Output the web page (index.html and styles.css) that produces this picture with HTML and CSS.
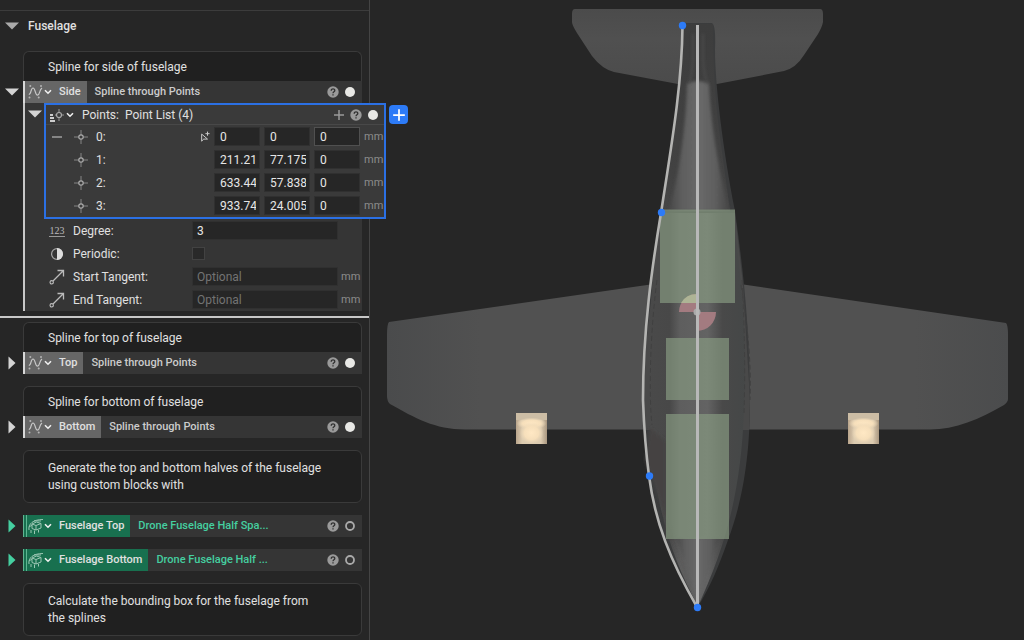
FILE: index.html
```html
<!DOCTYPE html>
<html lang="en">
<head>
<meta charset="utf-8">
<title>Fuselage</title>
<link rel="stylesheet" href="styles.css">
</head>
<body>
<svg class="defs" aria-hidden="true">
  <symbol id="down" viewBox="0 0 14 8"><path d="M0 0.500H14L7 7.500Z" fill="currentColor"/></symbol>
  <symbol id="right" viewBox="0 0 8 14"><path d="M0.500 0.500V13.500L7.500 7Z" fill="currentColor"/></symbol>
  <symbol id="chev" viewBox="0 0 8 6"><path d="M1 1.200 4 4.200 7 1.200" fill="none" stroke="#f0f0f0" stroke-width="1.600"/></symbol>
  <symbol id="spline" viewBox="0 0 16 16"><path d="M0.800 10.500C3.500 10.500 2.500 4 5 4S7 11.200 9.500 11.200 11 6 14 4" fill="none" stroke="#c8c8c8" stroke-width="1.200"/><g fill="#b4b4b4"><circle cx="2.300" cy="2" r="1"/><circle cx="13" cy="2" r="1"/><circle cx="1.500" cy="13.500" r="1"/><circle cx="10.700" cy="13.500" r="1"/></g></symbol>
  <symbol id="point" viewBox="0 0 14 14"><path d="M7 0V5M7 9V14M0 7H5M9 7H14" stroke="#858585" stroke-width="1"/><circle cx="7" cy="7" r="2.200" fill="none" stroke="#aaa" stroke-width="1.200"/></symbol>
  <symbol id="list" viewBox="0 0 16 16"><path d="M1 8H4M1 11H5M1 14H6" stroke="#ccc" stroke-width="2"/><path d="M10 2V6M10 10V14M6 8H8M12 8H15" stroke="#999"/><circle cx="10" cy="8" r="2.500" fill="none" stroke="#aaa" stroke-width="1.200"/></symbol>
  <symbol id="help" viewBox="0 0 12 12"><circle cx="6" cy="6" r="5.700" fill="#9a9a9a"/><path d="M4.200 4.700C4.200 2.300 7.900 2.400 7.800 4.600 7.800 5.900 6 5.800 6 7.300M6 8.200V9.500" fill="none" stroke="#303030" stroke-width="1.300"/></symbol>
  <symbol id="dot" viewBox="0 0 12 12"><circle cx="6" cy="6" r="5" fill="#e8e8e5"/></symbol>
  <symbol id="ring" viewBox="0 0 12 12"><circle cx="6" cy="6" r="4" fill="none" stroke="#aaa" stroke-width="1.800"/></symbol>
  <symbol id="plus" viewBox="0 0 12 12"><path d="M6 1V11M1 6H11" stroke="currentColor" stroke-width="1.500"/></symbol>
  <symbol id="block" viewBox="0 0 16 16"><path d="M1 12C0 6 5 1.500 15 1.500M4 6 8.500 4 13 5.500V10M4 6 8 7.500 13 5.500M4 6V10.500L8 12V7.500M8 12 13 10M3 12V15M6.500 12.500V16M10.500 12V14.500M1 9 4 7M6 2.800 13 3" fill="none" stroke="#9cc7b4" stroke-width="1"/></symbol>
  <symbol id="vector" viewBox="0 0 16 16"><path d="M4 12 14 2M8.500 1.500H14.500V7.500" fill="none" stroke="#bbb" stroke-width="1.300"/><circle cx="2.700" cy="13.300" r="1.700" fill="none" stroke="#bbb" stroke-width="1.100"/></symbol>
  <symbol id="half" viewBox="0 0 14 14"><circle cx="7" cy="7" r="5.400" fill="none" stroke="#a8a8a8" stroke-width="1.200"/><path d="M7 1A6 6 0 0 1 7 13Z" fill="#ddd"/></symbol>
  <symbol id="pick" viewBox="0 0 12 14"><path d="M2 3.500V12L4.500 9.500H9Z" fill="none" stroke="#c8c8c8" stroke-width="1.200"/><path d="M9 0.500V5.500M6.500 3H11.500" stroke="#c8c8c8" stroke-width="1.200"/></symbol>
</svg>
<div class="app">
  <aside class="sidebar">
    <div class="previous"></div>
    <h2 class="section"><button class="twisty" aria-label="Collapse Fuselage"><svg class="down dim"><use href="#down"/></svg></button>Fuselage</h2>

    <section class="node">
      <p class="comment attached">Spline for side of fuselage</p>
      <button class="twisty" aria-label="Collapse Side"><svg class="down"><use href="#down"/></svg></button>
      <header class="head">
        <button class="chip"><svg class="i16"><use href="#spline"/></svg><svg class="chev"><use href="#chev"/></svg><span>Side</span></button>
        <span class="kind">Spline through Points</span>
        <button class="tool" aria-label="Help"><svg class="i12"><use href="#help"/></svg></button>
        <button class="tool" aria-label="Output"><svg class="i12"><use href="#dot"/></svg></button>
      </header>
      <div class="body">
        <div class="nested">
          <button class="twisty" aria-label="Collapse Points"><svg class="down"><use href="#down"/></svg></button>
          <div class="panel">
            <header class="panel-head">
              <svg class="i16"><use href="#list"/></svg><svg class="chev"><use href="#chev"/></svg>
              <span class="pname">Points:</span><span class="ptype">Point List (4)</span>
              <button class="tool grey" aria-label="Add point"><svg class="i12"><use href="#plus"/></svg></button>
              <button class="tool" aria-label="Help"><svg class="i12"><use href="#help"/></svg></button>
              <button class="tool" aria-label="Output"><svg class="i12"><use href="#dot"/></svg></button>
            </header>
            <div class="point"><button class="remove" aria-label="Remove point"></button><svg class="i14"><use href="#point"/></svg><span class="index">0:</span><button class="pick" aria-label="Pick point"><svg><use href="#pick"/></svg></button><input aria-label="Point 0 X" value="0"><input aria-label="Point 0 Y" value="0"><input class="active" aria-label="Point 0 Z" value="0"><span class="unit">mm</span></div>
            <div class="point"><span class="spacer"></span><svg class="i14"><use href="#point"/></svg><span class="index">1:</span><input aria-label="Point 1 X" value="211.21"><input aria-label="Point 1 Y" value="77.175"><input aria-label="Point 1 Z" value="0"><span class="unit">mm</span></div>
            <div class="point"><span class="spacer"></span><svg class="i14"><use href="#point"/></svg><span class="index">2:</span><input aria-label="Point 2 X" value="633.44"><input aria-label="Point 2 Y" value="57.838"><input aria-label="Point 2 Z" value="0"><span class="unit">mm</span></div>
            <div class="point"><span class="spacer"></span><svg class="i14"><use href="#point"/></svg><span class="index">3:</span><input aria-label="Point 3 X" value="933.74"><input aria-label="Point 3 Y" value="24.005"><input aria-label="Point 3 Z" value="0"><span class="unit">mm</span></div>
            <button class="add" aria-label="Add"><svg class="i14" viewBox="0 0 12 12"><use href="#plus"/></svg></button>
          </div>
        </div>
        <div class="prop"><span class="digits" aria-hidden="true">123</span><label for="degree">Degree:</label><input id="degree" value="3"><span class="unit"></span></div>
        <div class="prop"><svg class="i14"><use href="#half"/></svg><label for="periodic">Periodic:</label><span class="cell"><input type="checkbox" id="periodic"></span><span class="unit"></span></div>
        <div class="prop"><svg class="i16"><use href="#vector"/></svg><label for="start">Start Tangent:</label><input id="start" placeholder="Optional"><span class="unit">mm</span></div>
        <div class="prop"><svg class="i16"><use href="#vector"/></svg><label for="end">End Tangent:</label><input id="end" placeholder="Optional"><span class="unit">mm</span></div>
      </div>
    </section>

    <div class="marker"></div>

    <section class="node">
      <p class="comment attached">Spline for top of fuselage</p>
      <button class="twisty" aria-label="Expand Top"><svg class="right"><use href="#right"/></svg></button>
      <header class="head">
        <button class="chip"><svg class="i16"><use href="#spline"/></svg><svg class="chev"><use href="#chev"/></svg><span>Top</span></button>
        <span class="kind">Spline through Points</span>
        <button class="tool" aria-label="Help"><svg class="i12"><use href="#help"/></svg></button>
        <button class="tool" aria-label="Output"><svg class="i12"><use href="#dot"/></svg></button>
      </header>
    </section>

    <section class="node">
      <p class="comment attached">Spline for bottom of fuselage</p>
      <button class="twisty" aria-label="Expand Bottom"><svg class="right"><use href="#right"/></svg></button>
      <header class="head">
        <button class="chip"><svg class="i16"><use href="#spline"/></svg><svg class="chev"><use href="#chev"/></svg><span>Bottom</span></button>
        <span class="kind">Spline through Points</span>
        <button class="tool" aria-label="Help"><svg class="i12"><use href="#help"/></svg></button>
        <button class="tool" aria-label="Output"><svg class="i12"><use href="#dot"/></svg></button>
      </header>
    </section>

    <section class="node"><p class="comment">Generate the top and bottom halves of the fuselage using custom blocks with</p></section>

    <section class="node custom">
      <button class="twisty" aria-label="Expand Fuselage Top"><svg class="right"><use href="#right"/></svg></button>
      <header class="head">
        <button class="chip"><svg class="i16"><use href="#block"/></svg><svg class="chev"><use href="#chev"/></svg><span>Fuselage Top</span></button>
        <span class="kind">Drone Fuselage Half Spa...</span>
        <button class="tool" aria-label="Help"><svg class="i12"><use href="#help"/></svg></button>
        <button class="tool" aria-label="Output"><svg class="i12"><use href="#ring"/></svg></button>
      </header>
    </section>
    <section class="node custom">
      <button class="twisty" aria-label="Expand Fuselage Bottom"><svg class="right"><use href="#right"/></svg></button>
      <header class="head">
        <button class="chip"><svg class="i16"><use href="#block"/></svg><svg class="chev"><use href="#chev"/></svg><span>Fuselage Bottom</span></button>
        <span class="kind">Drone Fuselage Half ...</span>
        <button class="tool" aria-label="Help"><svg class="i12"><use href="#help"/></svg></button>
        <button class="tool" aria-label="Output"><svg class="i12"><use href="#ring"/></svg></button>
      </header>
    </section>

    <section class="node"><p class="comment">Calculate the bounding box for the fuselage from the splines</p></section>
  </aside>

  <main class="viewport">
    <svg class="scene" viewBox="370 0 654 640" role="img" aria-label="Top view of drone model">
      <defs>
        <linearGradient id="tailg" x1="0" y1="0" x2="0" y2="1"><stop offset="0" stop-color="#4b4b4b"/><stop offset=".4" stop-color="#505050"/><stop offset="1" stop-color="#4b4b4b"/></linearGradient>
        <linearGradient id="wingg" x1="0" x2="1"><stop offset="0" stop-color="#4a4b4c"/><stop offset=".15" stop-color="#515151"/><stop offset=".85" stop-color="#515151"/><stop offset="1" stop-color="#4b4c4d"/></linearGradient>
        <linearGradient id="bodyg" gradientUnits="userSpaceOnUse" x1="644" x2="750" y1="0" y2="0"><stop offset="0" stop-color="#4a4a4a"/><stop offset=".24" stop-color="#484848"/><stop offset=".34" stop-color="#5e5e5e"/><stop offset=".6" stop-color="#636363"/><stop offset=".74" stop-color="#494949"/><stop offset="1" stop-color="#444747"/></linearGradient>
        <linearGradient id="coneg" x1="0" x2="1"><stop offset="0" stop-color="#484848"/><stop offset=".22" stop-color="#5e5e5e"/><stop offset=".5" stop-color="#696969"/><stop offset=".78" stop-color="#5e5e5e"/><stop offset="1" stop-color="#454545"/></linearGradient>
        <linearGradient id="fade" x1="0" y1="0" x2="0" y2="1"><stop offset="0" stop-color="#3d3d3d"/><stop offset=".8" stop-color="#424242"/><stop offset="1" stop-color="#464646"/></linearGradient>
        <linearGradient id="lampg" x1="0" x2="1"><stop offset="0" stop-color="#b9a58c"/><stop offset=".2" stop-color="#dccbb0"/><stop offset=".8" stop-color="#dccbb0"/><stop offset="1" stop-color="#a99780"/></linearGradient>
        <radialGradient id="glow"><stop offset="0" stop-color="#ffe8c4"/><stop offset=".6" stop-color="#f6dfbb"/><stop offset="1" stop-color="#ead7b8" stop-opacity="0"/></radialGradient>
        <filter id="soft" x="-20%" y="-5%" width="140%" height="110%"><feGaussianBlur stdDeviation="1.500"/></filter>
        <g id="lamp"><rect width="31" height="31" fill="url(#lampg)"/><rect width="31" height="7" fill="#ccbda5"/><ellipse cx="15.500" cy="10.500" rx="15" ry="6" fill="url(#glow)"/><ellipse cx="15.500" cy="20" rx="12" ry="11" fill="url(#glow)"/></g>
      </defs>
      <path d="M575 9H820Q823 9 823 14V22Q822 27 818 34L804 55Q796 68 784 71L717 84H678L614 72Q602 69 592 56L577 33Q572 25 572 22V14Q572 9 575 9Z" fill="url(#tailg)"/>
      <path d="M389 322 654 284 698 280 740 284 1006 323Q1008 325 1008 335V399Q1008 402 1004 405C980 419 955 429.500 930 429.500H465C435 429.500 415 418 390 404Q387 401 387 396V335Q387 324 389 322Z" fill="url(#wingg)"/>
      <path d="M683 23H712Q716 25 715 50C715 84 723 150 735 211 743 268 750 330 750 400 750 463 741 505 728 540 720 563 710 588 698 606 674 577 650 515 644 430 640 350 654 260 661 213 675 140 683 60 683 23Z" fill="#3b3c3d"/>
      <path d="M654 284 661 213H735L743 284 750 400 749 430H644Q642 350 654 284Z" fill="#494949"/>
      <path d="M683 24H713Q713 84 719 130L730 211H661C676 130 682 70 683 24Z" fill="url(#fade)"/>
      <path d="M660 213H732C744 290 747 350 744 410 741 495 724 550 698 606 673 560 654 510 650 420 647 350 651 270 660 213Z" fill="url(#bodyg)"/>
      <path d="M650 428 666 441V539H673L698 606 645 460Z" fill="#454342" filter="url(#soft)"/>
      <path d="M687 84Q698 78 709 84C711 130 721 180 729 211H669C678 180 686 130 687 84Z" fill="url(#coneg)" filter="url(#soft)"/>
      <path d="M676 538H720L698 604Z" fill="url(#coneg)" filter="url(#soft)"/>
      <path d="M693 34V60Q692 77 689 84M703 34V60Q704 77 708 84" fill="none" stroke="#565656" filter="url(#soft)"/>
      <path d="M657 280C648 350 650 410 652 425M742 280Q746 350 744 415M741 285Q752 350 750 400" fill="none" stroke="#404040" stroke-dasharray="5 3"/>
      <g fill="#889b82" fill-opacity=".68"><path d="M660 209.500H735V303H660ZM666 338H729V400H666ZM666 414H729V539H666Z"/></g>
      <path d="M679 312A18 18 0 0 1 697 294V312ZM697 312H716A19 19 0 0 1 697 331Z" fill="#a37b80"/>
      <path d="M681 303Q686 294 697 294V303Z" fill="#aeb495"/><circle cx="697" cy="312" r="3.500" fill="#aaa"/>
      <path d="M682.500 26C682 86 671 148 661 213 652 267 643 330 643 400 644 428 646 453 649 476 655 522 670 560 697 607" fill="none" stroke="#b4b4b2" stroke-width="2.600"/>
      <path d="M697.500 25V607" stroke="#b8b8b8" stroke-width="3"/>
      <g fill="#2d7bf7"><circle cx="682.500" cy="25.500" r="3.700"/><circle cx="661.500" cy="212.500" r="3.700"/><circle cx="649.500" cy="476" r="3.700"/><circle cx="697.500" cy="607.500" r="3.700"/></g>
      <use href="#lamp" x="516" y="413"/><use href="#lamp" x="848" y="413"/>
    </svg>
  </main>
</div>
</body>
</html>
```
FILE: styles.css
```css
* { box-sizing: border-box; }
body { margin: 0; background: #262626; color: #e0e0e0; font: 12px/18px Roboto, "Liberation Sans", sans-serif; }
button { display: flex; align-items: center; justify-content: center; margin: 0; padding: 0; border: 0; background: none; color: inherit; font: inherit; }
svg { display: block; flex: none; }
.defs { position: absolute; width: 0; height: 0; }
.app { display: grid; grid-template: minmax(0, 1fr) / 370px minmax(0, 1fr); height: 100vh; overflow: hidden; }
.sidebar { position: relative; z-index: 1; border-right: 1px solid #444; }
.viewport { min-width: 0; min-height: 0; }
.scene { width: 100%; height: 100%; }
.i12 { width: 12px; height: 12px; }
.i14 { width: 14px; height: 14px; }
.i16 { width: 16px; height: 16px; }
.chev { width: 8px; height: 6px; }
.down { width: 14px; height: 8px; }
.right { width: 8px; height: 14px; }
.dim { color: #aaa; }

.previous { height: 11px; border-bottom: 1px solid #3c3c3c; }
.section { display: grid; grid-template-columns: 28px 1fr; align-items: center; height: 30px; margin: 0 0 10px; font-size: 12px; font-weight: 500; }
.section .twisty { justify-content: flex-start; padding-left: 5px; }
.node { display: grid; grid-template-columns: 23px minmax(0, 1fr); margin: 0 7px 12px 0; }
.twisty { color: #d4d4d4; }
.comment { grid-column: 2; margin: 0; padding: 9px 36px 8px 24px; border: 1px solid #3a3a3a; border-radius: 6px; background: #202020; line-height: 17px; }
.attached { padding: 7px 24px 5px; border-bottom: 0; border-radius: 6px 6px 0 0; }
.head { display: flex; align-items: center; height: 22px; padding-right: 6px; background: #353535; font-size: 11px; font-weight: 500; }
.chip { height: 100%; padding: 0 6px 0 3px; border-left: 2px solid #d8d8d8; background: #666; }
.chip span { margin-left: 7px; }
.kind { flex: 1; margin-left: 8px; color: #ccc; white-space: nowrap; }
.tool { margin-left: 5px; }
.grey { color: #999; }

.body { grid-column: 2; border-left: 2px solid #c8c8c8; background: #353535; }
.nested { display: grid; grid-template-columns: 19px minmax(0, 1fr); align-items: start; }
.nested .twisty { height: 22px; }
.panel { position: relative; margin-right: -24px; border: 2px solid #2b70e4; background: #3a3a3a; }
.panel-head { display: flex; align-items: center; gap: 1px; height: 20px; padding: 0 5px 0 3px; border-bottom: 1px solid #484848; }
.pname { margin-left: 7px; }
.ptype { flex: 1; margin-left: 5px; }
.panel-head .tool { margin-left: 4px; }
.point { display: flex; align-items: center; gap: 4px; height: 23px; padding: 0 2px 0 6px; }
.remove, .spacer { width: 10px; height: 2px; margin-right: 8px; }
.remove { background: #858585; }
.index { flex: 1; margin-left: 4px; }
.pick svg { width: 10px; height: 14px; }
.point input, .prop > input { width: 46px; height: 19px; padding: 0 3px 0 5px; border: 1px solid #303030; background: #262626; color: #e6e6e6; font: inherit; }
.point .active { border-color: #505050; }
.unit { width: 18px; color: #8c8c8c; font-size: 11px; }
.add { position: absolute; top: 0; right: -24px; width: 19px; height: 19px; border-radius: 4px; background: #2d7bf7; color: #fff; }

.prop { display: grid; grid-template-columns: 16px 111px minmax(0, 1fr) 21px; column-gap: 8px; align-items: center; height: 23px; padding-left: 24px; }
.prop > input { width: auto; margin-right: -5px; padding-left: 4px; }
.prop .unit { width: auto; }
.prop .i14 { margin-left: 1px; }
.prop input::placeholder { color: #737373; opacity: 1; }
.digits { border-bottom: 1px solid #999; color: #bbb; font: 10px/11px "Liberation Serif", serif; text-align: center; }
.cell { display: flex; }
.cell input { appearance: none; width: 13px; height: 13px; margin: 0; border: 1px solid #424242; background: #292929; }

.marker { height: 2px; margin: -7px 0 4px; background: #c8c8c8; }
.custom .twisty, .custom .kind { color: #45cfa0; }
.custom .chip { padding-left: 1px; border-left: 4px double #5fb592; background: #18704f; }
```
